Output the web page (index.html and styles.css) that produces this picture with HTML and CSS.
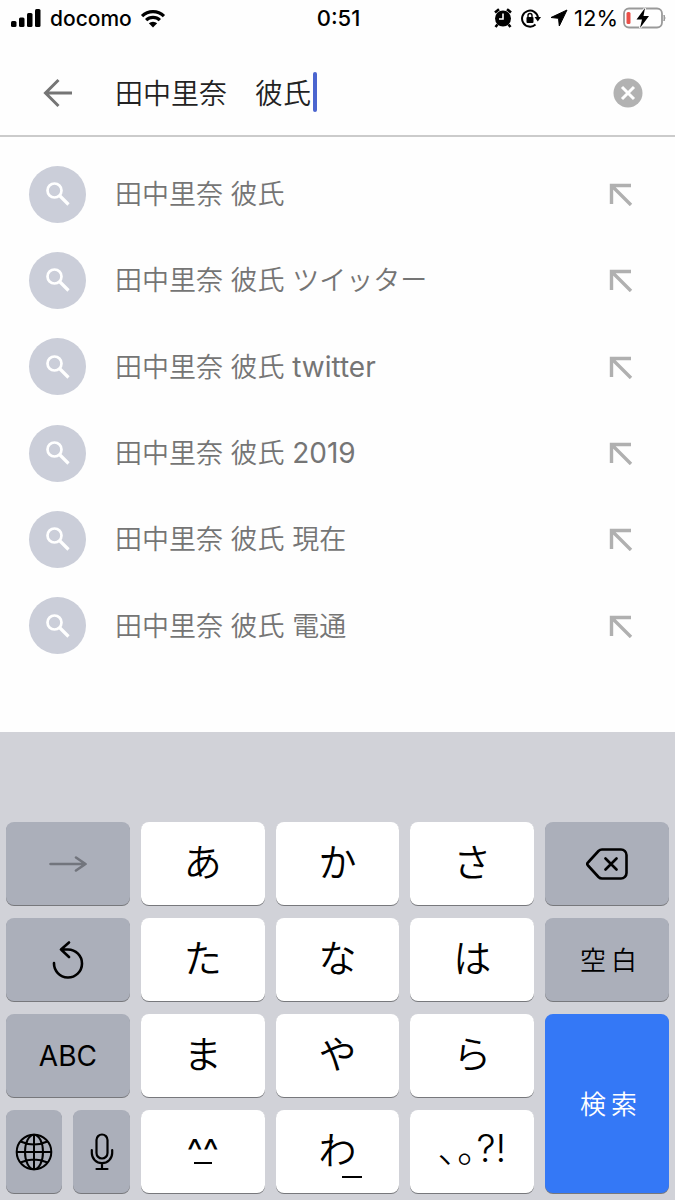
FILE: index.html
```html
<!DOCTYPE html>
<html lang="ja">
<head>
<meta charset="utf-8">
<meta name="viewport" content="width=device-width, initial-scale=1">
<title>検索</title>
<link rel="stylesheet" href="styles.css">
</head>
<body>
<svg class="defs" aria-hidden="true">
  <symbol id="search" viewBox="0 0 24 24"><circle cx="8.500" cy="8.500" r="7" fill="none" stroke="currentColor" stroke-width="2.700"/><path d="M13.500 13.500l9 9" stroke="currentColor" stroke-width="3.200"/></symbol>
  <symbol id="insert" viewBox="0 0 24 24"><path d="M2.500 22V3.500H22M3 4l19 19" fill="none" stroke="currentColor" stroke-width="3.400"/></symbol>
</svg>
<div class="screen">
  <div class="status">
    <div class="status-left">
      <svg width="31" height="20" viewBox="0 0 31 20"><rect x="0" y="13" width="5.500" height="6" rx="1.500"/><rect x="8" y="9.500" width="5.500" height="9.500" rx="1.500"/><rect x="16" y="5" width="5.500" height="14" rx="1.500"/><rect x="24" y="1" width="5.500" height="18" rx="1.500"/></svg>
      <span class="carrier">docomo</span>
      <svg width="26" height="19" viewBox="0 0 28 20"><path d="M2.200 7.400a17 17 0 0 1 23.600 0M6.600 11.800a10.800 10.800 0 0 1 14.800 0" fill="none" stroke="#000" stroke-width="3.500"/><path d="M9.500 15.200a6.500 6.500 0 0 1 9 0L14 19.800z"/></svg>
    </div>
    <span class="clock">0:51</span>
    <div class="status-right">
      <svg width="18" height="20" viewBox="0 0 18 20"><circle cx="9" cy="10.500" r="8"/><path d="M1 4.500L5 1.200M17 4.500L13 1.200M3.500 16.500L1.500 19M14.500 16.500l2 2.500" stroke="#000" stroke-width="2.600"/><path d="M9 5.500v5.500H5" fill="none" stroke="#fff" stroke-width="1.600"/></svg>
      <svg width="20" height="20" viewBox="0 0 20 20"><path d="M14.500 16.500A8 8 0 1 1 17 9.500" fill="none" stroke="#000" stroke-width="2"/><path d="M13.500 9h6.500l-3.200 4.500z"/><rect x="5.500" y="9" width="7" height="6" rx="1"/><path d="M7 9.500V7.500a2 2 0 0 1 4 0v2" fill="none" stroke="#000" stroke-width="1.400"/></svg>
      <svg width="18" height="18" viewBox="0 0 18 18"><path d="M17 1L1 8.500l7.500.8.800 7.700z" stroke="#000" stroke-linejoin="round"/></svg>
      <span class="percent">12%</span>
      <svg width="43" height="22" viewBox="0 0 43 22"><rect x="1" y="1.500" width="38" height="19" rx="5" fill="none" stroke="#999" stroke-width="1.800"/><path d="M41 8q2 3 0 6z" fill="#999" stroke="#999"/><rect x="3.500" y="5" width="4" height="12" rx="1.500" fill="#ea4f48"/><path d="M22 1L13.500 12.500h5.500L17 21l9-12h-5.500z" stroke="#fff" stroke-width="2" paint-order="stroke"/></svg>
    </div>
  </div>
  <header class="searchbar">
    <button class="back" aria-label="戻る"><svg width="30" height="30" viewBox="0 0 30 30"><path d="M29 15H3M15.500 2L2.500 15l13 13" fill="none" stroke="#757575" stroke-width="3"/></svg></button>
    <div class="field">
      <input type="text" aria-label="検索" value="田中里奈　彼氏"><span class="caret"></span>
    </div>
    <button class="clear" aria-label="消去"><svg width="30" height="30" viewBox="0 0 30 30"><circle cx="15" cy="15" r="14.500" fill="#b2b2b2"/><path d="M9 9l12 12M21 9L9 21" stroke="#fff" stroke-width="3"/></svg></button>
  </header>
  <ul class="suggestions">
    <li><a href="#"><span class="disc"><svg><use href="#search"/></svg></span><span class="term">田中里奈 彼氏</span><svg class="insert"><use href="#insert"/></svg></a></li>
    <li><a href="#"><span class="disc"><svg><use href="#search"/></svg></span><span class="term">田中里奈 彼氏 ツイッター</span><svg class="insert"><use href="#insert"/></svg></a></li>
    <li><a href="#"><span class="disc"><svg><use href="#search"/></svg></span><span class="term">田中里奈 彼氏 <span class="latin">twitter</span></span><svg class="insert"><use href="#insert"/></svg></a></li>
    <li><a href="#"><span class="disc"><svg><use href="#search"/></svg></span><span class="term">田中里奈 彼氏 <span class="latin">2019</span></span><svg class="insert"><use href="#insert"/></svg></a></li>
    <li><a href="#"><span class="disc"><svg><use href="#search"/></svg></span><span class="term">田中里奈 彼氏 現在</span><svg class="insert"><use href="#insert"/></svg></a></li>
    <li><a href="#"><span class="disc"><svg><use href="#search"/></svg></span><span class="term">田中里奈 彼氏 電通</span><svg class="insert"><use href="#insert"/></svg></a></li>
  </ul>
  <div class="keyboard">
    <button class="key fn" aria-label="次候補"><svg width="38" height="16" viewBox="0 0 38 16"><path d="M1.500 8h35M27 1.500L36.500 8 27 14.500" fill="none" stroke="#72757d" stroke-width="2.600" stroke-linecap="round" stroke-linejoin="round"/></svg></button>
    <button class="key kana">あ</button>
    <button class="key kana">か</button>
    <button class="key kana">さ</button>
    <button class="key fn" aria-label="削除"><svg width="42" height="32" viewBox="0 0 42 32"><path d="M16 1.500h19a5.500 5.500 0 0 1 5.500 5.500v18a5.500 5.500 0 0 1-5.500 5.500H16q-2 0-3.500-1.500L2 17.500q-1.500-1.500 0-3L12.500 3Q14 1.500 16 1.500zM19.500 10.500l11 11M30.500 10.500l-11 11" fill="none" stroke="#000" stroke-width="2.600" stroke-linecap="round" stroke-linejoin="round"/></svg></button>
    <button class="key fn" aria-label="戻す"><svg width="32" height="38" viewBox="0 0 32 38"><path d="M2 22A14 14 0 1 0 16 8.500H9M17 1.500L9 8.500l8 7.500" fill="none" stroke="#000" stroke-width="2.600" stroke-linecap="round" stroke-linejoin="round"/></svg></button>
    <button class="key kana">た</button>
    <button class="key kana">な</button>
    <button class="key kana">は</button>
    <button class="key fn word"><span>空</span><span>白</span></button>
    <button class="key fn abc">ABC</button>
    <button class="key kana">ま</button>
    <button class="key kana">や</button>
    <button class="key kana">ら</button>
    <button class="key go word"><span>検</span><span>索</span></button>
    <div class="pair">
      <button class="key fn" aria-label="言語"><svg width="38" height="38" viewBox="0 0 38 38"><g fill="none" stroke="#000" stroke-width="2"><circle cx="19" cy="19" r="17.300"/><ellipse cx="19" cy="19" rx="9" ry="17.300"/><path d="M19 1.700v34.600M1.700 19h34.600M5.500 8.500q13.500 6 27 0M5.500 29.500q13.500-6 27 0"/></g></svg></button>
      <button class="key fn" aria-label="音声入力"><svg width="24" height="38" viewBox="0 0 24 38"><g fill="none" stroke="#000" stroke-width="2.200" stroke-linecap="round"><rect x="6.500" y="1.500" width="11" height="24" rx="5.500"/><path d="M1.800 17v3a10.200 10.200 0 0 0 20.400 0v-3M12 30.500V36M6.500 36h11"/></g></svg></button>
    </div>
    <button class="key face"><span>^^</span><i></i></button>
    <button class="key kana">わ<i></i></button>
    <button class="key kana punct">､｡?!</button>
  </div>
</div>
</body>
</html>
```
FILE: styles.css
```css
* { box-sizing: border-box; }
body {
  margin: 0;
  background: #fefefe;
  font-family: Inter, "Noto Sans CJK JP", sans-serif;
}
button {
  border: 0;
  padding: 0;
  background: none;
  font: inherit;
  color: #000;
}
svg { display: block; flex: none; }
.defs { position: absolute; width: 0; height: 0; }
.screen {
  display: flex;
  flex-direction: column;
  min-height: 100vh;
}
.status {
  display: grid;
  grid-template-columns: 1fr auto 1fr;
  align-items: center;
  height: 36px;
  padding: 0 9px 0 11px;
  font-size: 22px;
}
.status-left, .status-right { display: flex; align-items: center; }
.status-left { gap: 8px; }
.carrier { font-size: 21px; font-weight: 500; }
.status-right { gap: 9px; justify-content: flex-end; }
.percent { margin: 0 -4px 0 -3px; }
.clock { font-weight: 500; }
.searchbar {
  display: flex;
  align-items: center;
  height: 101px;
  padding: 14px 32px 0 43px;
  border-bottom: 2px solid #cbcbcb;
}
.back { margin-right: 42px; }
.field {
  flex: 1;
  display: flex;
  align-items: center;
  padding-bottom: 2px;
}
.field input {
  width: 7em;
  height: 44px;
  border: 0;
  padding: 0;
  outline: 0;
  background: none;
  color: #222;
  font-family: "Noto Sans CJK JP", sans-serif;
  font-size: 28px;
  font-weight: 350;
}
.caret {
  width: 4px;
  height: 40px;
  margin-left: 2px;
  border-radius: 2px;
  background: #4b65cf;
}
.suggestions {
  flex: 1;
  display: flex;
  flex-direction: column;
  margin: 0;
  padding: 14px 0 63px;
  list-style: none;
}
.suggestions li { flex: 1; display: flex; }
.suggestions a {
  flex: 1;
  display: flex;
  align-items: center;
  padding: 0 42px 0 29px;
  color: #757575;
  text-decoration: none;
}
.disc {
  display: grid;
  place-items: center;
  width: 57px;
  height: 57px;
  border-radius: 50%;
  background: #cbced9;
  color: #fff;
}
.disc svg { width: 24px; height: 24px; }
.term {
  flex: 1;
  margin-left: 29px;
  padding-top: 2px;
  font-size: 27px;
  font-weight: 350;
  line-height: 40px;
}
.latin { font-size: 28px; font-weight: 400; line-height: 1; }
.insert { width: 24px; height: 24px; color: #b0b0b0; }
.keyboard {
  display: grid;
  grid-template-columns: repeat(5, minmax(0, 1fr));
  grid-auto-rows: 83px;
  gap: 13px 11px;
  padding: 90px 6px 7px;
  background: #d1d2d8;
}
.key {
  display: flex;
  align-items: center;
  justify-content: center;
  position: relative;
  border-radius: 8px;
  background: #fff;
  box-shadow: 0 1px 0 #77787c;
  font-family: "Noto Sans CJK JP", sans-serif;
}
.kana {
  padding-bottom: 8px;
  font-size: 38px;
  font-weight: 350;
  line-height: 44px;
}
.kana i {
  position: absolute;
  left: 54%;
  bottom: 15px;
  width: 20px;
  height: 2px;
  background: #000;
}
.fn { background: #abafba; }
.word {
  gap: 5px;
  padding: 0 0 3px 3px;
  font-size: 26px;
  font-weight: 350;
}
.abc { font-family: Inter, sans-serif; font-size: 28px; }
.go { grid-row: span 2; background: #3478f6; color: #fff; }
.pair { display: grid; grid-template-columns: 1fr 1fr; gap: 11px; }
.face {
  flex-direction: column;
  font-family: Inter, sans-serif;
  font-size: 34px;
  line-height: 22px;
}
.face i { width: 18px; height: 2px; background: #000; }
.punct { font-family: Inter, "Noto Sans CJK JP", sans-serif; font-weight: 300; }
```
